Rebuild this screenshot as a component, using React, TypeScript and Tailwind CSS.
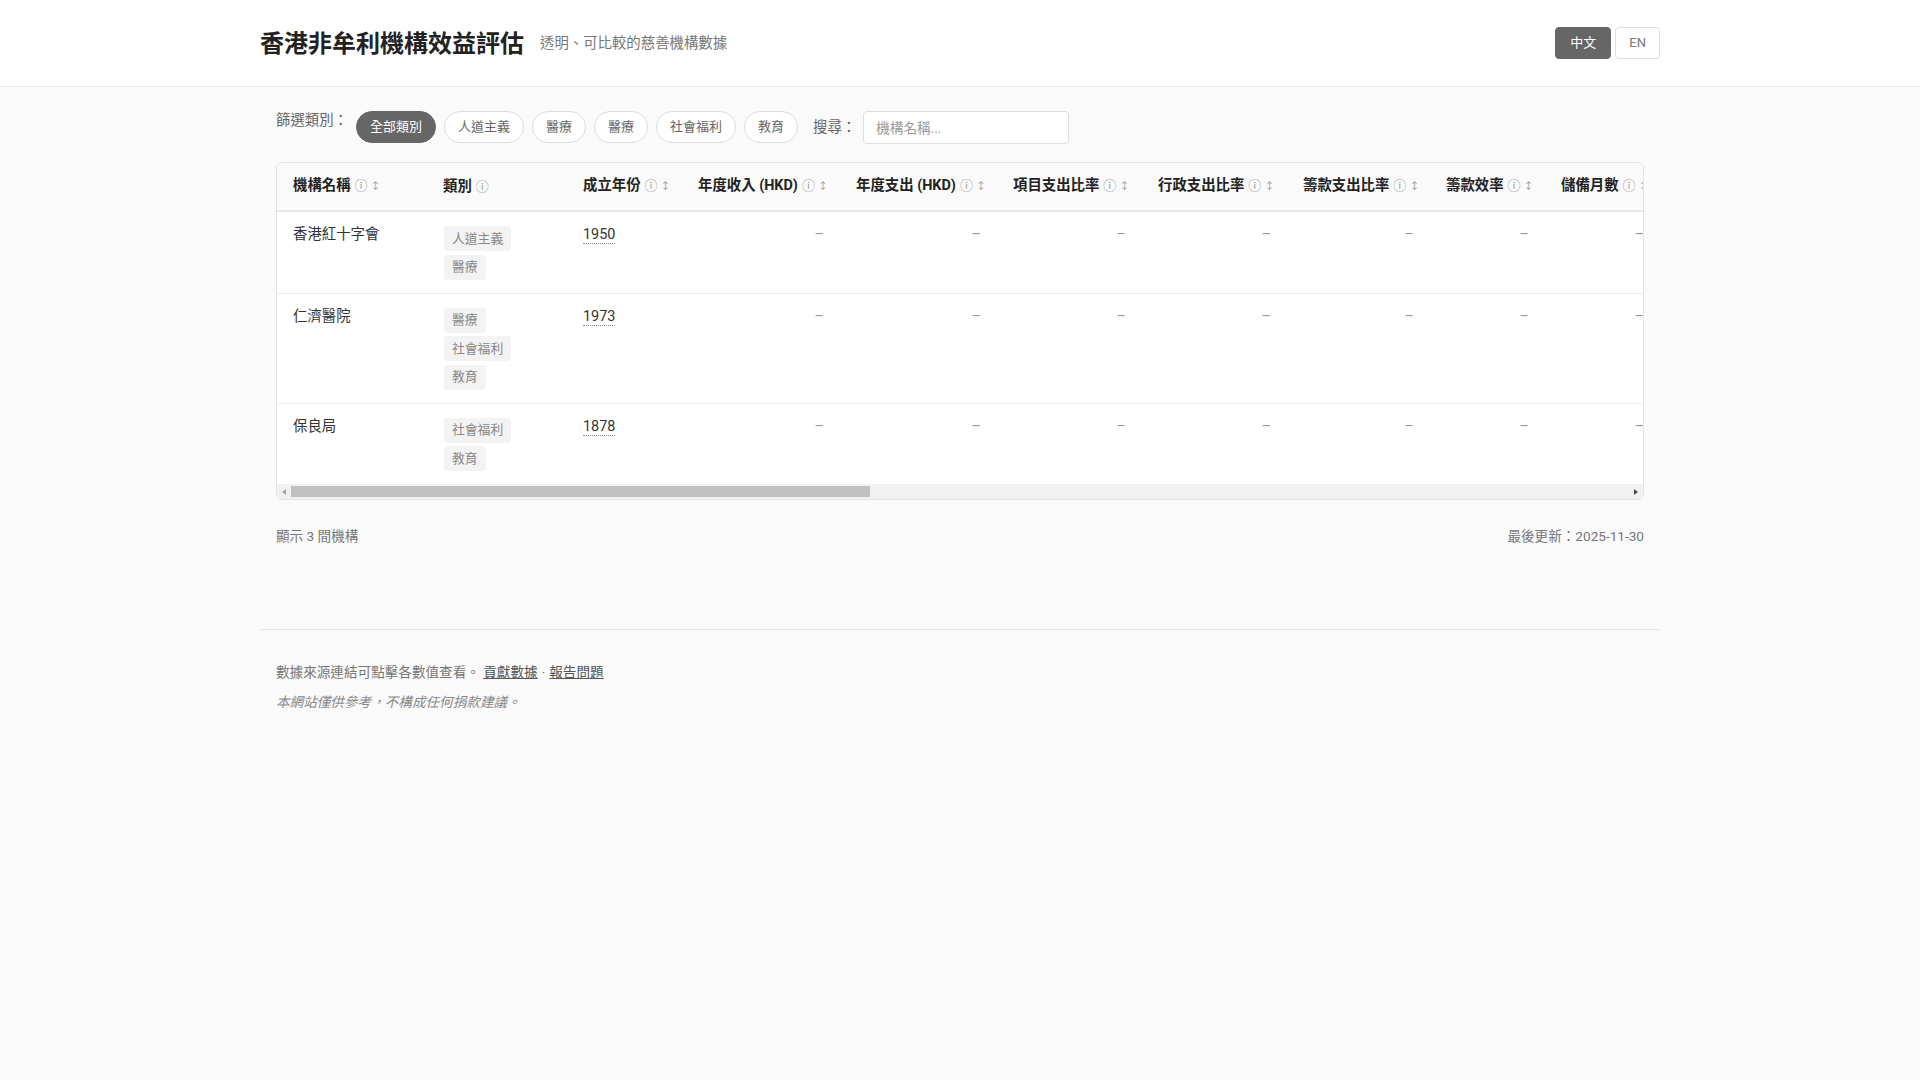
import React, { useLayoutEffect, useRef, useState } from "react";

const FONT = "font-['Roboto','Noto_Sans_CJK_TC',sans-serif]";

type Col = {
  key: string;
  label: string;
  width?: string;
  align: "left" | "right";
  sort: boolean;
};

// Visible columns have fixed widths; the last one takes what is left of the table width.
const COLS: Col[] = [
  { key: "name", label: "機構名稱", width: "w-[150px]", align: "left", sort: true },
  { key: "cat", label: "類別", width: "w-[140px]", align: "left", sort: false },
  { key: "year", label: "成立年份", width: "w-[115px]", align: "left", sort: true },
  { key: "income", label: "年度收入 (HKD)", width: "w-[158px]", align: "right", sort: true },
  { key: "expense", label: "年度支出 (HKD)", width: "w-[157px]", align: "right", sort: true },
  { key: "program", label: "項目支出比率", width: "w-[145px]", align: "right", sort: true },
  { key: "admin", label: "行政支出比率", width: "w-[145px]", align: "right", sort: true },
  { key: "fund", label: "籌款支出比率", width: "w-[143px]", align: "right", sort: true },
  { key: "eff", label: "籌款效率", width: "w-[115px]", align: "right", sort: true },
  { key: "reserve", label: "儲備月數", width: "w-[115px]", align: "right", sort: true },
  { key: "benef", label: "受惠人數", width: "w-[115px]", align: "right", sort: true },
  { key: "staff", label: "員工人數", width: "w-[115px]", align: "right", sort: true },
  { key: "vol", label: "義工人數", width: "w-[115px]", align: "right", sort: true },
  { key: "gov", label: "政府資助比率", width: "w-[145px]", align: "right", sort: true },
  { key: "don", label: "捐款收入比率", width: "w-[145px]", align: "right", sort: true },
  { key: "trans", label: "透明度評分", width: "w-[130px]", align: "right", sort: true },
  { key: "fy", label: "財政年度", width: "w-[115px]", align: "right", sort: true },
  { key: "reg", label: "註冊編號", width: "w-[115px]", align: "right", sort: true },
  { key: "src", label: "數據來源", align: "right", sort: false },
];

const ORGS = [
  { name: "香港紅十字會", cats: ["人道主義", "醫療"], year: 1950 },
  { name: "仁濟醫院", cats: ["醫療", "社會福利", "教育"], year: 1973 },
  { name: "保良局", cats: ["社會福利", "教育"], year: 1878 },
];

const FILTERS = ["全部類別", "人道主義", "醫療", "醫療", "社會福利", "教育"];

// Scroll bar drawn by hand, so it looks the same whether or not the browser shows its own.
function useScrollBar() {
  const ref = useRef<HTMLDivElement>(null);
  const [bar, setBar] = useState({ left: 0, width: 578, atStart: true, atEnd: false });

  const update = () => {
    const el = ref.current;
    if (!el) return;
    const track = el.clientWidth - 28;
    const width = Math.max(20, (track * el.clientWidth) / el.scrollWidth);
    const max = el.scrollWidth - el.clientWidth;
    const left = max > 0 ? ((track - width) * el.scrollLeft) / max : 0;
    setBar({ left, width, atStart: el.scrollLeft <= 0, atEnd: el.scrollLeft >= max - 1 });
  };

  useLayoutEffect(() => {
    update();
    window.addEventListener("resize", update);
    return () => window.removeEventListener("resize", update);
  }, []);

  return { ref, bar, update };
}

export default function App() {
  const [lang, setLang] = useState("zh");
  const [active, setActive] = useState(0);
  const [q, setQ] = useState("");
  const { ref, bar, update } = useScrollBar();

  const nudge = (d: number) => ref.current?.scrollBy({ left: d });

  return (
    <div className={`min-h-screen bg-[#fafafa] text-[#333] ${FONT}`}>
      <header className="border-b border-[#e8e8e8] bg-white">
        <div className="mx-auto flex h-[86px] max-w-[1400px] items-center justify-between">
          <div className="flex items-center gap-4">
            <h1 className="mt-px text-[24px] font-bold leading-8 text-[#222]">香港非牟利機構效益評估</h1>
            <span className="mt-px text-[14.4px] text-[#777]">透明、可比較的慈善機構數據</span>
          </div>
          <div className="flex gap-1">
            <button
              onClick={() => setLang("zh")}
              className={`h-8 rounded border px-[14px] text-[13px] ${lang === "zh" ? "border-[#666] bg-[#666] text-white" : "border-[#ddd] bg-white text-[#777]"}`}
            >
              中文
            </button>
            <button
              onClick={() => setLang("en")}
              className={`h-8 rounded border px-[13px] text-[13px] ${lang === "en" ? "border-[#666] bg-[#666] text-white" : "border-[#ddd] bg-white text-[#777]"}`}
            >
              EN
            </button>
          </div>
        </div>
      </header>

      <main className="mx-auto max-w-[1400px] px-4 pt-[24px]">
        <div className="flex items-start gap-2">
          <span className="text-[14.4px] leading-5 text-[#666]">篩選類別：</span>
          <div className="flex flex-wrap gap-2">
            {FILTERS.map((f, i) => (
              <button
                key={i}
                onClick={() => setActive(i)}
                className={`h-8 rounded-full border px-[13px] text-[13px] ${active === i ? "border-[#666] bg-[#666] text-white" : "border-[#ddd] bg-white text-[#666]"}`}
              >
                {f}
              </button>
            ))}
          </div>
          <div className="ml-[7px] flex items-center gap-[7px]">
            <span className="text-[14.4px] leading-5 text-[#666]">搜尋：</span>
            <input
              value={q}
              onChange={(e) => setQ(e.target.value)}
              placeholder="機構名稱..."
              className="h-[33px] w-[206px] rounded border border-[#ddd] bg-white px-3 text-[13.6px] text-[#333] outline-none placeholder:text-[#999]"
            />
          </div>
        </div>

        <div className="mt-[18px] overflow-hidden rounded-md border border-[#e5e5e5] bg-white">
          <div ref={ref} onScroll={update} className="overflow-x-auto [scrollbar-width:none] [&::-webkit-scrollbar]:hidden">
            <table className="w-[3158px] table-fixed">
              <colgroup>
                {COLS.map((c) => (
                  <col key={c.key} className={c.width} />
                ))}
              </colgroup>
              <thead>
                <tr>
                  {COLS.map((c) => (
                    <th
                      key={c.key}
                      className={`whitespace-nowrap border-b-2 border-[#e8e8e8] bg-[#fafafa] px-4 py-[13px] text-[14.4px] font-bold leading-5 text-[#222] ${c.align === "right" ? "text-right" : "text-left"}`}
                    >
                      {c.label}
                      <span className="ml-1 text-[13px] font-normal text-[#999]">ⓘ</span>
                      {c.sort && <span className="ml-[3px] text-[10px] font-normal text-[#999]">↕</span>}
                    </th>
                  ))}
                </tr>
              </thead>
              <tbody>
                {ORGS.map((o, r) => (
                  <tr key={o.name} className={r < ORGS.length - 1 ? "border-b border-[#eee]" : ""}>
                    {COLS.map((c) => {
                      const base = `px-4 pt-[14px] pb-[13px] align-top text-[14.4px] leading-[18px] ${c.align === "right" ? "text-right" : "text-left"}`;
                      if (c.key === "name") return <td key={c.key} className={`${base} text-[#333]`}>{o.name}</td>;
                      if (c.key === "cat")
                        return (
                          <td key={c.key} className={base}>
                            <div className="ml-px flex flex-col items-start gap-[3.5px]">
                              {o.cats.map((t) => (
                                <span key={t} className="inline-flex h-[25px] items-center rounded bg-[#f3f3f3] px-2 text-[12.8px] text-[#888]">
                                  {t}
                                </span>
                              ))}
                            </div>
                          </td>
                        );
                      if (c.key === "year")
                        return (
                          <td key={c.key} className={base}>
                            <span className="border-b border-dotted border-[#888] text-[#333]">{o.year}</span>
                          </td>
                        );
                      return (
                        <td key={c.key} className={`${base} text-[#999]`}>
                          –
                        </td>
                      );
                    })}
                  </tr>
                ))}
              </tbody>
            </table>
          </div>
          <div className="flex h-[15px] items-stretch bg-[#f1f1f1]">
            <button onClick={() => nudge(-60)} className="flex w-[14px] shrink-0 items-center justify-center">
              <span className={`h-0 w-0 border-y-[3.5px] border-r-[4px] border-y-transparent ${bar.atStart ? "border-r-[#a3a3a3]" : "border-r-[#505050]"}`} />
            </button>
            <div className="flex-1 py-[2px]">
              <div className="h-full bg-[#c1c1c1]" style={{ width: bar.width, marginLeft: bar.left }} />
            </div>
            <button onClick={() => nudge(60)} className="flex w-[14px] shrink-0 items-center justify-center">
              <span className={`h-0 w-0 border-y-[3.5px] border-l-[4px] border-y-transparent ${bar.atEnd ? "border-l-[#a3a3a3]" : "border-l-[#505050]"}`} />
            </button>
          </div>
        </div>

        <div className="mt-[26px] flex items-center justify-between text-[13.6px] leading-5 text-[#777]">
          <span>顯示 3 間機構</span>
          <span>最後更新：2025-11-30</span>
        </div>
      </main>

      <footer className="mx-auto mt-[83px] max-w-[1400px] border-t border-[#e5e5e5] px-4 pt-8 pb-10">
        <p className="text-[13.6px] leading-5 text-[#777]">
          數據來源連結可點擊各數值查看。{" "}
          <a href="#" className="text-[#555] underline">貢獻數據</a>
          <span className="mx-1">·</span>
          <a href="#" className="text-[#555] underline">報告問題</a>
        </p>
        <p className="mt-[10px] text-[13.6px] italic leading-5 text-[#888]">本網站僅供參考，不構成任何捐款建議。</p>
      </footer>
    </div>
  );
}
